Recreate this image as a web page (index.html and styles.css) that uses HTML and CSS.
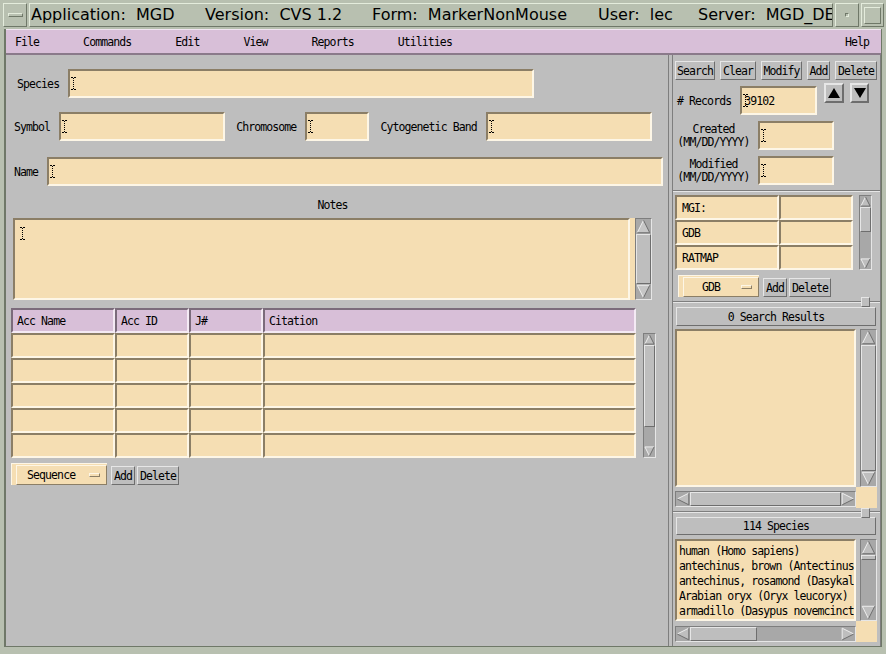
FILE: index.html
```html
<!DOCTYPE html>
<html>
<head>
<meta charset="utf-8">
<title>MGD MarkerNonMouse</title>
<link rel="stylesheet" href="styles.css">
</head>
<body>
<div class="win">
  <header class="titlebar">
    <div class="tb-box tb-menu"><span class="tb-bar"></span></div>
    <div class="tb-title"><span class="seg s1">Application:  MGD</span><span class="seg s2">Version:  CVS 1.2</span><span class="seg s3">Form:  MarkerNonMouse</span><span class="seg s4">User:  lec</span><span class="seg s5">Server:  MGD_DEV</span></div>
    <div class="tb-box tb-min"><span class="tb-dot"></span></div>
    <div class="tb-box tb-max"><span class="tb-sq"></span></div>
  </header>
  <div class="client">
    <nav class="menubar">
      <span>File</span><span>Commands</span><span>Edit</span><span>View</span><span>Reports</span><span>Utilities</span><span class="help">Help</span>
    </nav>
    <div class="main">
      <section class="left">
        <div class="row r-species"><span>Species</span><div class="tf w466 ml9"><svg class="ib" width="5" height="13" viewBox="0 0 5 13"><path d="M0 0.5H2M3 0.5H5M0 12.5H2M3 12.5H5" stroke="#000"/><path d="M2.5 1V12" stroke="#000" stroke-dasharray="1 1"/></svg></div></div>
        <div class="row r-symbol"><span>Symbol</span><div class="tf w166 ml9"><svg class="ib" width="5" height="13" viewBox="0 0 5 13"><path d="M0 0.5H2M3 0.5H5M0 12.5H2M3 12.5H5" stroke="#000"/><path d="M2.5 1V12" stroke="#000" stroke-dasharray="1 1"/></svg></div><span class="ml11">Chromosome</span><div class="tf w64 ml9"><svg class="ib" width="5" height="13" viewBox="0 0 5 13"><path d="M0 0.5H2M3 0.5H5M0 12.5H2M3 12.5H5" stroke="#000"/><path d="M2.5 1V12" stroke="#000" stroke-dasharray="1 1"/></svg></div><span class="ml11">Cytogenetic Band</span><div class="tf w166 ml9"><svg class="ib" width="5" height="13" viewBox="0 0 5 13"><path d="M0 0.5H2M3 0.5H5M0 12.5H2M3 12.5H5" stroke="#000"/><path d="M2.5 1V12" stroke="#000" stroke-dasharray="1 1"/></svg></div></div>
        <div class="row r-name"><span>Name</span><div class="tf w616 ml9"><svg class="ib" width="5" height="13" viewBox="0 0 5 13"><path d="M0 0.5H2M3 0.5H5M0 12.5H2M3 12.5H5" stroke="#000"/><path d="M2.5 1V12" stroke="#000" stroke-dasharray="1 1"/></svg></div></div>
        <div class="notes-lbl">Notes</div>
        <div class="notes">
          <div class="notes-sw"><div class="notes-ta"><svg class="ib" width="5" height="13" viewBox="0 0 5 13"><path d="M0 0.5H2M3 0.5H5M0 12.5H2M3 12.5H5" stroke="#000"/><path d="M2.5 1V12" stroke="#000" stroke-dasharray="1 1"/></svg></div></div>
          <div class="vsb nscroll">
            <svg class="sa a15" viewBox="0 0 12 12" preserveAspectRatio="none"><polygon points="6,1 11,11 1,11" fill="#c6c6c6"/><path d="M1 11L6 1" stroke="#eeeeee" vector-effect="non-scaling-stroke"/><path d="M6 1L11 11H1" stroke="#6e6e6e" vector-effect="non-scaling-stroke"/></svg>
            <div class="thumb" style="height:50px"></div>
            <div class="fill"></div>
            <svg class="sa a15" viewBox="0 0 12 12" preserveAspectRatio="none"><polygon points="1,1 11,1 6,11" fill="#c6c6c6"/><path d="M11 1H1L6 11" stroke="#eeeeee" vector-effect="non-scaling-stroke"/><path d="M11 1L6 11" stroke="#6e6e6e" vector-effect="non-scaling-stroke"/></svg>
          </div>
        </div>
        <div class="tblwrap">
          <div class="grid grid-main">
            <div class="th">Acc Name</div><div class="th">Acc ID</div><div class="th">J#</div><div class="th">Citation</div>
            <div class="td"></div><div class="td"></div><div class="td"></div><div class="td"></div>
            <div class="td"></div><div class="td"></div><div class="td"></div><div class="td"></div>
            <div class="td"></div><div class="td"></div><div class="td"></div><div class="td"></div>
            <div class="td"></div><div class="td"></div><div class="td"></div><div class="td"></div>
            <div class="td"></div><div class="td"></div><div class="td"></div><div class="td"></div>
          </div>
          <div class="vsb tscroll">
            <svg class="sa a11" viewBox="0 0 12 12" preserveAspectRatio="none"><polygon points="6,1 11,11 1,11" fill="#bebebe"/><path d="M1 11L6 1" stroke="#eeeeee" vector-effect="non-scaling-stroke"/><path d="M6 1L11 11H1" stroke="#6e6e6e" vector-effect="non-scaling-stroke"/></svg>
            <div class="thumb" style="height:82px"></div>
            <div class="fill"></div>
            <svg class="sa a11" viewBox="0 0 12 12" preserveAspectRatio="none"><polygon points="1,1 11,1 6,11" fill="#bebebe"/><path d="M11 1H1L6 11" stroke="#eeeeee" vector-effect="non-scaling-stroke"/><path d="M11 1L6 11" stroke="#6e6e6e" vector-effect="non-scaling-stroke"/></svg>
          </div>
        </div>
        <div class="row r-seq">
          <div class="opt opt-seq"><div class="opt-btn"><span class="opt-txt">Sequence</span><span class="opt-ind"></span></div></div>
          <div class="btn w24 ml4">Add</div><div class="btn w42 ml2">Delete</div>
        </div>
      </section>
      <div class="sash"></div>
      <section class="right">
        <div class="sec1">
          <div class="btnrow"><div class="btn w40">Search</div><div class="btn w36">Clear</div><div class="btn w41">Modify</div><div class="btn w23">Add</div><div class="btn w42">Delete</div></div>
          <div class="row r-rec">
            <span class="lbl-rec"># Records</span>
            <div class="tf w77 ml9 mt3"><svg class="ib" width="5" height="13" viewBox="0 0 5 13"><path d="M0 0.5H2M3 0.5H5M0 12.5H2M3 12.5H5" stroke="#000"/><path d="M2.5 1V12" stroke="#000" stroke-dasharray="1 1"/></svg><span class="val">39102</span></div>
            <div class="abtn w20 ml7"><svg width="12" height="10" viewBox="0 0 12 10"><polygon points="6,0 12,10 0,10" fill="#000"/></svg></div>
            <div class="abtn w19 ml6"><svg width="12" height="10" viewBox="0 0 12 10"><polygon points="0,0 12,0 6,10" fill="#000"/></svg></div>
          </div>
          <div class="row r-date"><div class="lbl2">Created<br>(MM/DD/YYYY)</div><div class="tf w76 ml8"><svg class="ib" width="5" height="13" viewBox="0 0 5 13"><path d="M0 0.5H2M3 0.5H5M0 12.5H2M3 12.5H5" stroke="#000"/><path d="M2.5 1V12" stroke="#000" stroke-dasharray="1 1"/></svg></div></div>
          <div class="row r-date"><div class="lbl2">Modified<br>(MM/DD/YYYY)</div><div class="tf w76 ml8"><svg class="ib" width="5" height="13" viewBox="0 0 5 13"><path d="M0 0.5H2M3 0.5H5M0 12.5H2M3 12.5H5" stroke="#000"/><path d="M2.5 1V12" stroke="#000" stroke-dasharray="1 1"/></svg></div></div>
          <div class="sep"></div>
          <div class="accwrap">
            <div class="grid grid-acc">
              <div class="td acc">MGI:</div><div class="td"></div>
              <div class="td acc">GDB</div><div class="td"></div>
              <div class="td acc">RATMAP</div><div class="td"></div>
            </div>
            <div class="vsb ascroll">
              <svg class="sa a11" viewBox="0 0 12 12" preserveAspectRatio="none"><polygon points="6,1 11,11 1,11" fill="#bebebe"/><path d="M1 11L6 1" stroke="#eeeeee" vector-effect="non-scaling-stroke"/><path d="M6 1L11 11H1" stroke="#6e6e6e" vector-effect="non-scaling-stroke"/></svg>
              <div class="thumb" style="height:25px"></div>
              <div class="fill"></div>
              <svg class="sa a11" viewBox="0 0 12 12" preserveAspectRatio="none"><polygon points="1,1 11,1 6,11" fill="#bebebe"/><path d="M11 1H1L6 11" stroke="#eeeeee" vector-effect="non-scaling-stroke"/><path d="M11 1L6 11" stroke="#6e6e6e" vector-effect="non-scaling-stroke"/></svg>
            </div>
          </div>
          <div class="row r-gdb">
            <div class="opt opt-gdb"><div class="opt-btn"><span class="opt-txt">GDB</span><span class="opt-ind"></span></div></div>
            <div class="btn w24 ml4">Add</div><div class="btn w42 ml2">Delete</div>
          </div>
        </div>
        <div class="rsash"></div>
        <div class="sec2">
          <div class="btn hdrbtn">0 Search Results</div>
          <div class="sw sw1">
            <div class="list"></div>
            <div class="vsb">
              <svg class="sa a15" viewBox="0 0 12 12" preserveAspectRatio="none"><polygon points="6,1 11,11 1,11" fill="#bebebe"/><path d="M1 11L6 1" stroke="#eeeeee" vector-effect="non-scaling-stroke"/><path d="M6 1L11 11H1" stroke="#6e6e6e" vector-effect="non-scaling-stroke"/></svg>
              <div class="thumb" style="height:126px"></div>
              <div class="fill"></div>
              <svg class="sa a15" viewBox="0 0 12 12" preserveAspectRatio="none"><polygon points="1,1 11,1 6,11" fill="#bebebe"/><path d="M11 1H1L6 11" stroke="#eeeeee" vector-effect="non-scaling-stroke"/><path d="M11 1L6 11" stroke="#6e6e6e" vector-effect="non-scaling-stroke"/></svg>
            </div>
            <div class="hsb">
              <svg class="sa h14" viewBox="0 0 12 12" preserveAspectRatio="none"><polygon points="1,6 11,1 11,11" fill="#bebebe"/><path d="M1 6L11 1" stroke="#eeeeee" vector-effect="non-scaling-stroke"/><path d="M11 1V11L1 6" stroke="#6e6e6e" vector-effect="non-scaling-stroke"/></svg>
              <div class="thumb" style="width:151px"></div>
              <div class="fill"></div>
              <svg class="sa h14" viewBox="0 0 12 12" preserveAspectRatio="none"><polygon points="1,1 11,6 1,11" fill="#bebebe"/><path d="M1 11V1L11 6" stroke="#eeeeee" vector-effect="non-scaling-stroke"/><path d="M11 6L1 11" stroke="#6e6e6e" vector-effect="non-scaling-stroke"/></svg>
            </div>
            <div class="corner"></div>
          </div>
        </div>
        <div class="rsash"></div>
        <div class="sec3">
          <div class="btn hdrbtn h18">114 Species</div>
          <div class="sw sw2">
            <div class="list">
              <div>human (Homo sapiens)</div>
              <div>antechinus, brown (Antectinus stuartii)</div>
              <div>antechinus, rosamond (Dasykaluta rosamondae)</div>
              <div>Arabian oryx (Oryx leucoryx)</div>
              <div>armadillo (Dasypus novemcinctus)</div>
            </div>
            <div class="vsb">
              <svg class="sa a15" viewBox="0 0 12 12" preserveAspectRatio="none"><polygon points="6,1 11,11 1,11" fill="#bebebe"/><path d="M1 11L6 1" stroke="#eeeeee" vector-effect="non-scaling-stroke"/><path d="M6 1L11 11H1" stroke="#6e6e6e" vector-effect="non-scaling-stroke"/></svg>
              <div class="thumb" style="height:5px"></div>
              <div class="fill"></div>
              <svg class="sa a15" viewBox="0 0 12 12" preserveAspectRatio="none"><polygon points="1,1 11,1 6,11" fill="#bebebe"/><path d="M11 1H1L6 11" stroke="#eeeeee" vector-effect="non-scaling-stroke"/><path d="M11 1L6 11" stroke="#6e6e6e" vector-effect="non-scaling-stroke"/></svg>
            </div>
            <div class="hsb">
              <svg class="sa h14" viewBox="0 0 12 12" preserveAspectRatio="none"><polygon points="1,6 11,1 11,11" fill="#bebebe"/><path d="M1 6L11 1" stroke="#eeeeee" vector-effect="non-scaling-stroke"/><path d="M11 1V11L1 6" stroke="#6e6e6e" vector-effect="non-scaling-stroke"/></svg>
              <div class="thumb" style="width:67px"></div>
              <div class="fill"></div>
              <svg class="sa h14" viewBox="0 0 12 12" preserveAspectRatio="none"><polygon points="1,1 11,6 1,11" fill="#bebebe"/><path d="M1 11V1L11 6" stroke="#eeeeee" vector-effect="non-scaling-stroke"/><path d="M11 6L1 11" stroke="#6e6e6e" vector-effect="non-scaling-stroke"/></svg>
            </div>
            <div class="corner"></div>
          </div>
        </div>
        <span class="sq sq1"></span>
        <span class="sq sq2"></span>
      </section>
    </div>
  </div>
</div>
</body>
</html>
```
FILE: styles.css
```css
* { box-sizing: border-box; }
html, body { margin: 0; padding: 0; }
body {
  width: 886px; height: 654px; overflow: hidden;
  background: #b8c0b0;
  font-family: "DejaVu Sans Mono", monospace;
  font-size: 11.5px; letter-spacing: -0.9px; color: #000;
}
.win { width: 886px; height: 654px; display: flex; flex-direction: column; }

/* title bar */
.titlebar { height: 29px; flex: none; display: flex; gap: 2px; padding: 3px 2px 2px 3px; }
.tb-box {
  flex: none; border: 1px solid; border-color: #e4ecdc #6f7868 #6f7868 #e4ecdc;
  display: flex; align-items: center; justify-content: center;
}
.tb-menu { width: 24px; }
.tb-bar { width: 15px; height: 4px; border: 1px solid; border-color: #e4ecdc #6f7868 #6f7868 #e4ecdc; }
.tb-title {
  flex: 1; border: 1px solid; border-color: #e4ecdc #6f7868 #6f7868 #e4ecdc;
  font-family: "DejaVu Sans", sans-serif; font-size: 16px; letter-spacing: 0;
  line-height: 22px; white-space: pre; overflow: hidden; display: flex; padding-left: 1px;
}
.seg { flex: none; }
.s1 { width: 174px; } .s2 { width: 167px; } .s3 { width: 226px; } .s4 { width: 100px; }
.tb-min { width: 24px; }
.tb-dot { width: 4px; height: 4px; border: 1px solid; border-color: #6f7868 #e4ecdc #e4ecdc #6f7868; }
.tb-max { width: 23px; }
.tb-sq { width: 17px; height: 17px; border: 1px solid; border-color: #e4ecdc #6f7868 #6f7868 #e4ecdc; }

/* client */
.client {
  flex: 1; margin: 0 4px 7px 4px;
  border-left: 2px solid #6f7868; border-right: 1px solid #6f7868; border-bottom: 1px solid #6f7868;
  background: #bebebe; display: flex; flex-direction: column;
}
.menubar {
  height: 26px; flex: none; background: #d8bfd8;
  border-top: 1px solid #f2e6f2; border-bottom: 2px solid #8a7a8a;
  display: flex; align-items: center; gap: 44px; padding: 0 12px 0 9px;
}
.menubar .help { margin-left: auto; }
.main { flex: 1; display: flex; }
.left { width: 663px; flex: none; border-right: 1px solid #7e7e7e; display: flex; flex-direction: column; }
.sash { width: 3px; flex: none; }
.right {
  width: 209px; flex: none; border-left: 1px solid #7e7e7e; border-right: 1px solid #7e7e7e;
  position: relative; display: flex; flex-direction: column;
}

/* generic */
.row { display: flex; align-items: center; flex: none; }
.ml2 { margin-left: 2px; } .ml4 { margin-left: 4px; } .ml6 { margin-left: 6px; } .ml7 { margin-left: 7px; }
.ml8 { margin-left: 8px; } .ml9 { margin-left: 9px; } .ml11 { margin-left: 11px; }
.mt3 { margin-top: 3px; }
.w19 { width: 19px; } .w20 { width: 20px; } .w23 { width: 23px; } .w24 { width: 24px; }
.w36 { width: 36px; } .w40 { width: 40px; } .w41 { width: 41px; } .w42 { width: 42px; }
.w64 { width: 64px; } .w76 { width: 76px; } .w77 { width: 77px; } .w166 { width: 166px; }
.w466 { width: 466px; } .w616 { width: 616px; }

.tf {
  height: 29px; flex: none; background: #f5deb3;
  border: 2px solid; border-color: #8b7e66 #fdf6e6 #fdf6e6 #8b7e66;
  display: flex; align-items: center; padding-left: 1px;
}
.ib { display: block; flex: none; }
.val { margin-left: -4px; }

.btn {
  height: 19px; flex: none; background: #bebebe;
  border: 1px solid; border-color: #e6e6e6 #6e6e6e #6e6e6e #e6e6e6;
  display: flex; align-items: center; justify-content: center; white-space: nowrap;
}

/* left pane */
.r-species { margin: 14px 0 0 11px; }
.r-symbol { margin: 14px 0 0 8px; }
.r-name { margin: 16px 0 0 8px; }
.notes-lbl { margin: 13px 0 0 7px; width: 639px; height: 12px; line-height: 12px; text-align: center; }
.notes { margin: 7px 0 0 7px; display: flex; height: 82px; }
.notes-sw { width: 622px; background: #f5deb3; padding-right: 5px; }
.notes-ta {
  height: 100%; border: 2px solid; border-color: #8b7e66 #fdf6e6 #fdf6e6 #8b7e66;
  padding: 7px 0 0 5px;
}
.nscroll { width: 17px; background: #c8c8c8; border-left: 2px solid #6e6e6e; }

.tblwrap { margin: 8px 0 0 5px; display: flex; }
.grid { display: grid; grid-auto-rows: 25px; }
.grid-main { grid-template-columns: 104px 74px 74px 373px; }
.th {
  background: #d8bfd8; border: 2px solid; border-color: #7b6b7b #f4eaf4 #f4eaf4 #7b6b7b;
  padding-left: 4px; display: flex; align-items: center;
}
.td {
  background: #f5deb3; border: 2px solid; border-color: #8b7e66 #fdf6e6 #fdf6e6 #8b7e66;
  display: flex; align-items: center;
}
.td.acc { padding-left: 5px; }
.tscroll { margin: 25px 0 0 7px; width: 13px; height: 125px; }

.r-seq { margin: 5px 0 0 5px; align-items: flex-end; }
.opt {
  height: 22px; flex: none; background: #f5deb3;
  border-top: 1px solid #fdf6e6; border-left: 1px solid #fdf6e6;
  padding: 1px 0 0 4px; display: flex;
}
.opt-seq { width: 96px; }
.opt-gdb { width: 81px; }
.opt-btn {
  flex: 1; border: 1px solid; border-color: #fdf6e6 #8b7e66 #8b7e66 #fdf6e6;
  display: flex; align-items: center;
}
.opt-seq .opt-txt { padding-left: 10px; }
.opt-gdb .opt-txt { padding-left: 18px; }
.opt-ind {
  margin-left: auto; margin-right: 6px; width: 11px; height: 4px;
  border: 1px solid; border-color: #fdf6e6 #8b7e66 #8b7e66 #fdf6e6;
}

/* scrollbars */
.vsb, .hsb {
  display: flex; background: #a8a8a8;
  border: 1px solid; border-color: #7e7e7e #e6e6e6 #e6e6e6 #7e7e7e;
}
.vsb { flex-direction: column; }
.hsb { flex-direction: row; }
.sa { display: block; flex: none; }
.sa path { fill: none; }
.a15 { width: 100%; height: 15px; }
.a11 { width: 100%; height: 11px; }
.h14 { width: 14px; height: 100%; }
.thumb { flex: none; background: #bebebe; border: 1px solid; border-color: #e6e6e6 #6e6e6e #6e6e6e #e6e6e6; }
.fill { flex: 1; }

/* right pane */
.sec1 { height: 246px; flex: none; display: flex; flex-direction: column; }
.btnrow { margin: 6px 0 0 2px; display: flex; gap: 5px; }
.r-rec { margin: 3px 0 0 4px; align-items: flex-start; }
.lbl-rec { margin-top: 3px; height: 29px; display: flex; align-items: center; white-space: pre; }
.abtn {
  height: 20px; flex: none; background: #bebebe;
  border: 2px solid; border-color: #e6e6e6 #6e6e6e #6e6e6e #e6e6e6;
  display: flex; align-items: center; justify-content: center;
}
.r-date { margin: 6px 0 0 4px; }
.lbl2 { width: 73px; text-align: center; line-height: 13px; }
.sep { margin-top: 5px; height: 2px; flex: none; border-top: 1px solid #7e7e7e; border-bottom: 1px solid #e6e6e6; }
.accwrap { margin: 3px 0 0 2px; display: flex; }
.grid-acc { grid-template-columns: 104px 74px; }
.ascroll { margin-left: 6px; width: 13px; height: 75px; }
.r-gdb { margin: 5px 0 0 5px; align-items: flex-end; }

.rsash { height: 2px; flex: none; border-top: 1px solid #7e7e7e; border-bottom: 1px solid #e6e6e6; }
.sec2 { height: 208px; flex: none; display: flex; flex-direction: column; }
.sec3 { flex: 1; display: flex; flex-direction: column; }
.hdrbtn { margin: 4px 0 0 3px; width: 200px; }
.h18 { height: 18px; }
.sw { display: grid; grid-template-columns: 181px 21px; margin: 3px 0 0 2px; }
.sw1 { grid-template-rows: 158px 21px; }
.sw2 { grid-template-rows: 82px 21px; margin-top: 4px; }
.list {
  background: #f5deb3; border: 2px solid; border-color: #8b7e66 #fdf6e6 #fdf6e6 #8b7e66;
  overflow: hidden; white-space: nowrap; padding: 3px 0 0 2px; line-height: 15px;
}
.sw .vsb { margin-left: 4px; }
.sw .hsb { margin-top: 4px; height: 16px; }
.sw2 .hsb { margin-top: 5px; }
.corner { background: #f5deb3; }

.sq {
  position: absolute; left: 188px; width: 9px; height: 10px; background: #bebebe;
  border: 1px solid; border-color: #e6e6e6 #6e6e6e #6e6e6e #e6e6e6;
}
.sq1 { top: 242px; }
.sq2 { top: 453px; }
```
